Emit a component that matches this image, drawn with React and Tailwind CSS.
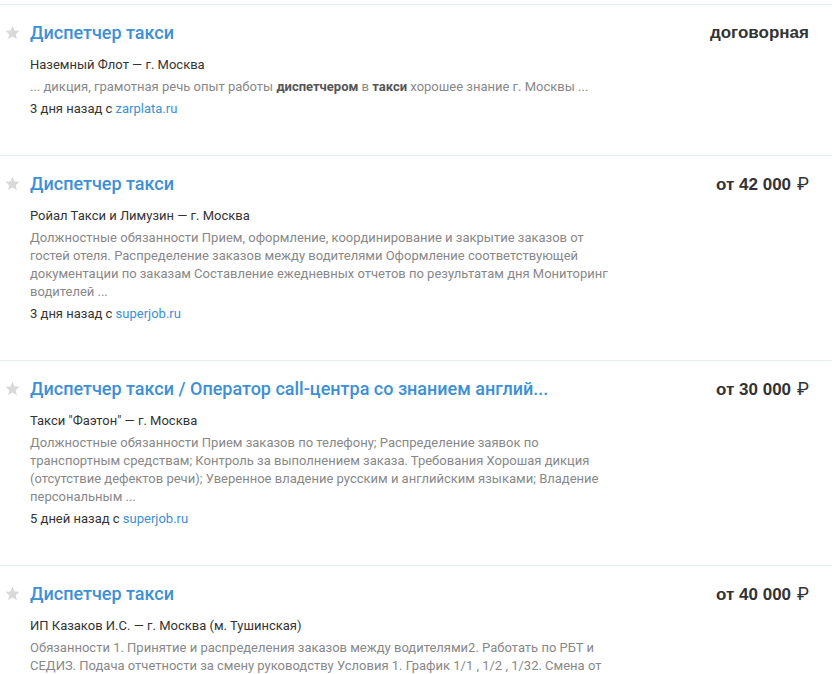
const vacancies = [
  {
    title: 'Диспетчер такси',
    salary: 'договорная',
    company: 'Наземный Флот — г. Москва',
    description: (
      <>
        ... дикция, грамотная речь опыт работы <b className="font-bold text-[#555]">диспетчером</b> в{' '}
        <b className="font-bold text-[#555]">такси</b> хорошее знание г. Москвы ...
      </>
    ),
    date: '3 дня назад с ',
    source: 'zarplata.ru',
  },
  {
    title: 'Диспетчер такси',
    salary: 'от 42 000',
    rub: true,
    company: 'Ройал Такси и Лимузин — г. Москва',
    description:
      'Должностные обязанности Прием, оформление, координирование и закрытие заказов от гостей отеля. Распределение заказов между водителями Оформление соответствующей документации по заказам Составление ежедневных отчетов по результатам дня Мониторинг водителей ...',
    date: '3 дня назад с ',
    source: 'superjob.ru',
  },
  {
    title: 'Диспетчер такси / Оператор call-центра со знанием англий...',
    salary: 'от 30 000',
    rub: true,
    company: 'Такси "Фаэтон" — г. Москва',
    description:
      'Должностные обязанности Прием заказов по телефону; Распределение заявок по транспортным средствам; Контроль за выполнением заказа. Требования Хорошая дикция (отсутствие дефектов речи); Уверенное владение русским и английским языками; Владение персональным ...',
    date: '5 дней назад с ',
    source: 'superjob.ru',
  },
  {
    title: 'Диспетчер такси',
    salary: 'от 40 000',
    rub: true,
    company: 'ИП Казаков И.С. — г. Москва (м. Тушинская)',
    description:
      'Обязанности 1. Принятие и распределения заказов между водителями2. Работать по РБТ и СЕДИЗ. Подача отчетности за смену руководству Условия 1. График 1/1 , 1/2 , 1/32. Смена от 12 часов. Оплата ...',
    date: '2 дня назад с ',
    source: 'superjob.ru',
  },
];

const Star = () => (
  <svg viewBox="0 0 24 24" className="h-[17px] w-[17px]" fill="#d9d9d9">
    <path d="M12 2.5l2.9 6.6 7.1.6-5.4 4.7 1.6 7-6.2-3.7-6.2 3.7 1.6-7L2 9.7l7.1-.6z" />
  </svg>
);

const VacancyCard = ({ item }) => (
  <div className="border-t border-[#e6eded] pt-4 pb-[37px] flex">
    <div className="w-[30px] shrink-0 pl-[4px] pt-[3px]">
      <Star />
    </div>
    <div className="flex-1 min-w-0 pr-[23px]">
      <div className="flex items-center justify-between h-6">
        <a className="text-[18px] leading-6 text-[#3d8fd6] font-medium whitespace-nowrap">
          {item.title}
        </a>
        <span className="font-['Liberation_Sans',Arial,sans-serif] text-[17px] font-bold text-[#333] whitespace-nowrap">
          {item.salary}
          {item.rub && (
            <span className="font-normal ml-[6px] text-[18px] font-['Roboto',sans-serif]">₽</span>
          )}
        </span>
      </div>
      <div className="mt-[11px] text-[13px] leading-[18px] text-[#333]">{item.company}</div>
      <div className="mt-1 text-[13px] leading-[18px] text-[#888] max-w-[580px]">
        {item.description}
      </div>
      <div className="mt-1 text-[13px] leading-[18px] text-[#333]">
        {item.date}
        <a className="text-[#3d8fd6]">{item.source}</a>
      </div>
    </div>
  </div>
);

export default function App() {
  return (
    <div className="bg-white w-[833px] h-[674px] overflow-hidden pt-1 font-['Roboto',sans-serif]">
      <div className="w-[832px]">
        {vacancies.map((v, i) => (
          <VacancyCard key={i} item={v} />
        ))}
      </div>
    </div>
  );
}
